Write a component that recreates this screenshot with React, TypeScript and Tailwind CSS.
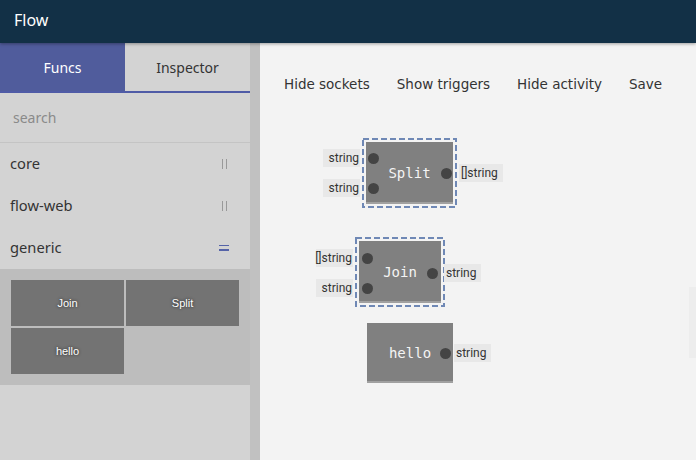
import { ReactNode } from 'react';

const sans = { fontFamily: '"Noto Sans", sans-serif' };
const roboto = { fontFamily: 'Roboto, sans-serif' };

type Input = { label: string; y: number };

type NodeProps = {
  name: string;
  x: number;
  y: number;
  w: number;
  h: number;
  selected?: boolean;
  inputs: Input[];
  inX: number;
  out: { label: string; y: number; right: number; gap: number };
};

function Dot({ style }: { style: React.CSSProperties }) {
  return <span className="absolute h-[11px] w-[11px] rounded-full bg-[#444444]" style={style} />;
}

function Label({ children, style, className }: { children: ReactNode; style: React.CSSProperties; className: string }) {
  return (
    <div
      className={`absolute flex h-[18px] items-center whitespace-nowrap bg-[#e8e8e8] text-[12px] leading-none text-[#333] ${className}`}
      style={{ ...roboto, ...style }}
    >
      {children}
    </div>
  );
}

// one function block on the canvas; x/y/w/h describe the grey body
function Node({ name, x, y, w, h, selected, inputs, inX, out }: NodeProps) {
  return (
    <div className="absolute" style={{ left: x, top: y, width: w, height: h }}>
      {selected && (
        <svg className="absolute -left-[4px] -top-[4px]" width={w + 8} height={h + 8}>
          <rect
            x={1}
            y={1}
            width={w + 6}
            height={h + 6}
            fill="none"
            stroke="#6f88b5"
            strokeWidth={2}
            strokeDasharray="6 3"
          />
        </svg>
      )}
      <div
        className="relative flex h-full w-full items-center justify-center bg-[#808080] pt-[1px] text-[14px] text-[#f4f4f4] shadow-[inset_0_-2px_0_#a0a0a0]"
        style={{ fontFamily: '"DejaVu Sans Mono", monospace' }}
      >
        {name}
        {inputs.map((i) => (
          <Dot key={i.y} style={{ left: inX, top: i.y - 5.5 }} />
        ))}
        <Dot style={{ right: out.right, top: out.y - 5.5 }} />
      </div>
      {inputs.map((i) => (
        <Label key={'l' + i.y} className="w-[37px] justify-end pr-[1px]" style={{ right: w + 6, top: i.y - 9 }}>
          {i.label}
        </Label>
      ))}
      <Label className="pl-[2px] pr-[5px]" style={{ left: w + out.gap, top: out.y - 9 }}>
        {out.label}
      </Label>
    </div>
  );
}

function Sidebar() {
  const groups = [
    { name: 'core', open: false },
    { name: 'flow-web', open: false },
    { name: 'generic', open: true },
  ];
  return (
    <div className="flex w-[260px] shrink-0 bg-[#c1c1c1]">
      <div className="flex w-[250px] flex-col bg-[#d3d3d3]" style={sans}>
        <div className="flex h-[50px] border-b-2 border-[#4f5ba6] text-[14px]">
          <div className="flex flex-1 items-center justify-center bg-[#505c9c] text-white">Funcs</div>
          <div className="flex flex-1 items-center justify-center text-[#333]">Inspector</div>
        </div>
        <div className="flex h-[50px] items-center border-b border-[#c4c4c4] px-[13px] text-[14px] text-[#8a8a8a]">
          search
        </div>
        {groups.map((g) => (
          <div
            key={g.name}
            className="flex h-[42px] items-center justify-between pb-[1px] pl-[10px] pr-[21px] text-[14.7px] text-[#333]"
          >
            <span>{g.name}</span>
            {g.open ? (
              <span className="flex flex-col gap-[3px]">
                <span className="h-[1.5px] w-[10px] bg-[#5563a8]" />
                <span className="h-[1.5px] w-[10px] bg-[#5563a8]" />
              </span>
            ) : (
              <span className="flex gap-[3px] pr-[2px]">
                <span className="h-[10px] w-[1px] bg-[#999]" />
                <span className="h-[10px] w-[1px] bg-[#999]" />
              </span>
            )}
          </div>
        ))}
        <div className="grid grid-cols-2 gap-[2px] bg-[#bdbdbd] p-[11px]">
          {['Join', 'Split', 'hello'].map((f) => (
            <div
              key={f}
              className="flex h-[46px] items-center justify-center bg-[#737373] text-[11px] text-white"
              style={{ fontFamily: '"Liberation Sans", Arial, sans-serif', textShadow: '0 0 3px #222' }}
            >
              {f}
            </div>
          ))}
        </div>
      </div>
    </div>
  );
}

export default function App() {
  return (
    <div className="flex h-[460px] w-[696px] flex-col overflow-hidden bg-[#f3f3f3]">
      <div
        className="z-10 flex h-[43px] shrink-0 items-center bg-[#123046] px-[14px] pb-[4px] text-[16px] text-white shadow-[0_1px_3px_rgba(0,0,0,0.35)]"
        style={sans}
      >
        Flow
      </div>
      <div className="flex flex-1">
        <Sidebar />
        <div className="relative flex-1 bg-[#f3f3f3]">
          <div
            className="flex gap-[27px] pl-[24px] pt-[31px] text-[13.5px] text-[#333]"
            style={{ fontFamily: '"DejaVu Sans", sans-serif' }}
          >
            <span>Hide sockets</span>
            <span>Show triggers</span>
            <span>Hide activity</span>
            <span>Save</span>
          </div>
          <Node
            name="Split"
            x={106}
            y={99}
            w={87}
            h={62}
            selected
            inX={2}
            inputs={[
              { label: 'string', y: 16 },
              { label: 'string', y: 46 },
            ]}
            out={{ label: '[]string', y: 31, right: 1, gap: 6 }}
          />
          <Node
            name="Join"
            x={99}
            y={198}
            w={82}
            h={62}
            selected
            inX={3}
            inputs={[
              { label: '[]string', y: 17 },
              { label: 'string', y: 47 },
            ]}
            out={{ label: 'string', y: 32, right: 3, gap: 3 }}
          />
          <Node
            name="hello"
            x={107}
            y={280}
            w={86}
            h={60}
            inX={2}
            inputs={[]}
            out={{ label: 'string', y: 30, right: 2, gap: 1 }}
          />
          <div className="absolute left-[429px] top-[244px] h-[71px] w-[10px] bg-[#ededed]" />
        </div>
      </div>
    </div>
  );
}
